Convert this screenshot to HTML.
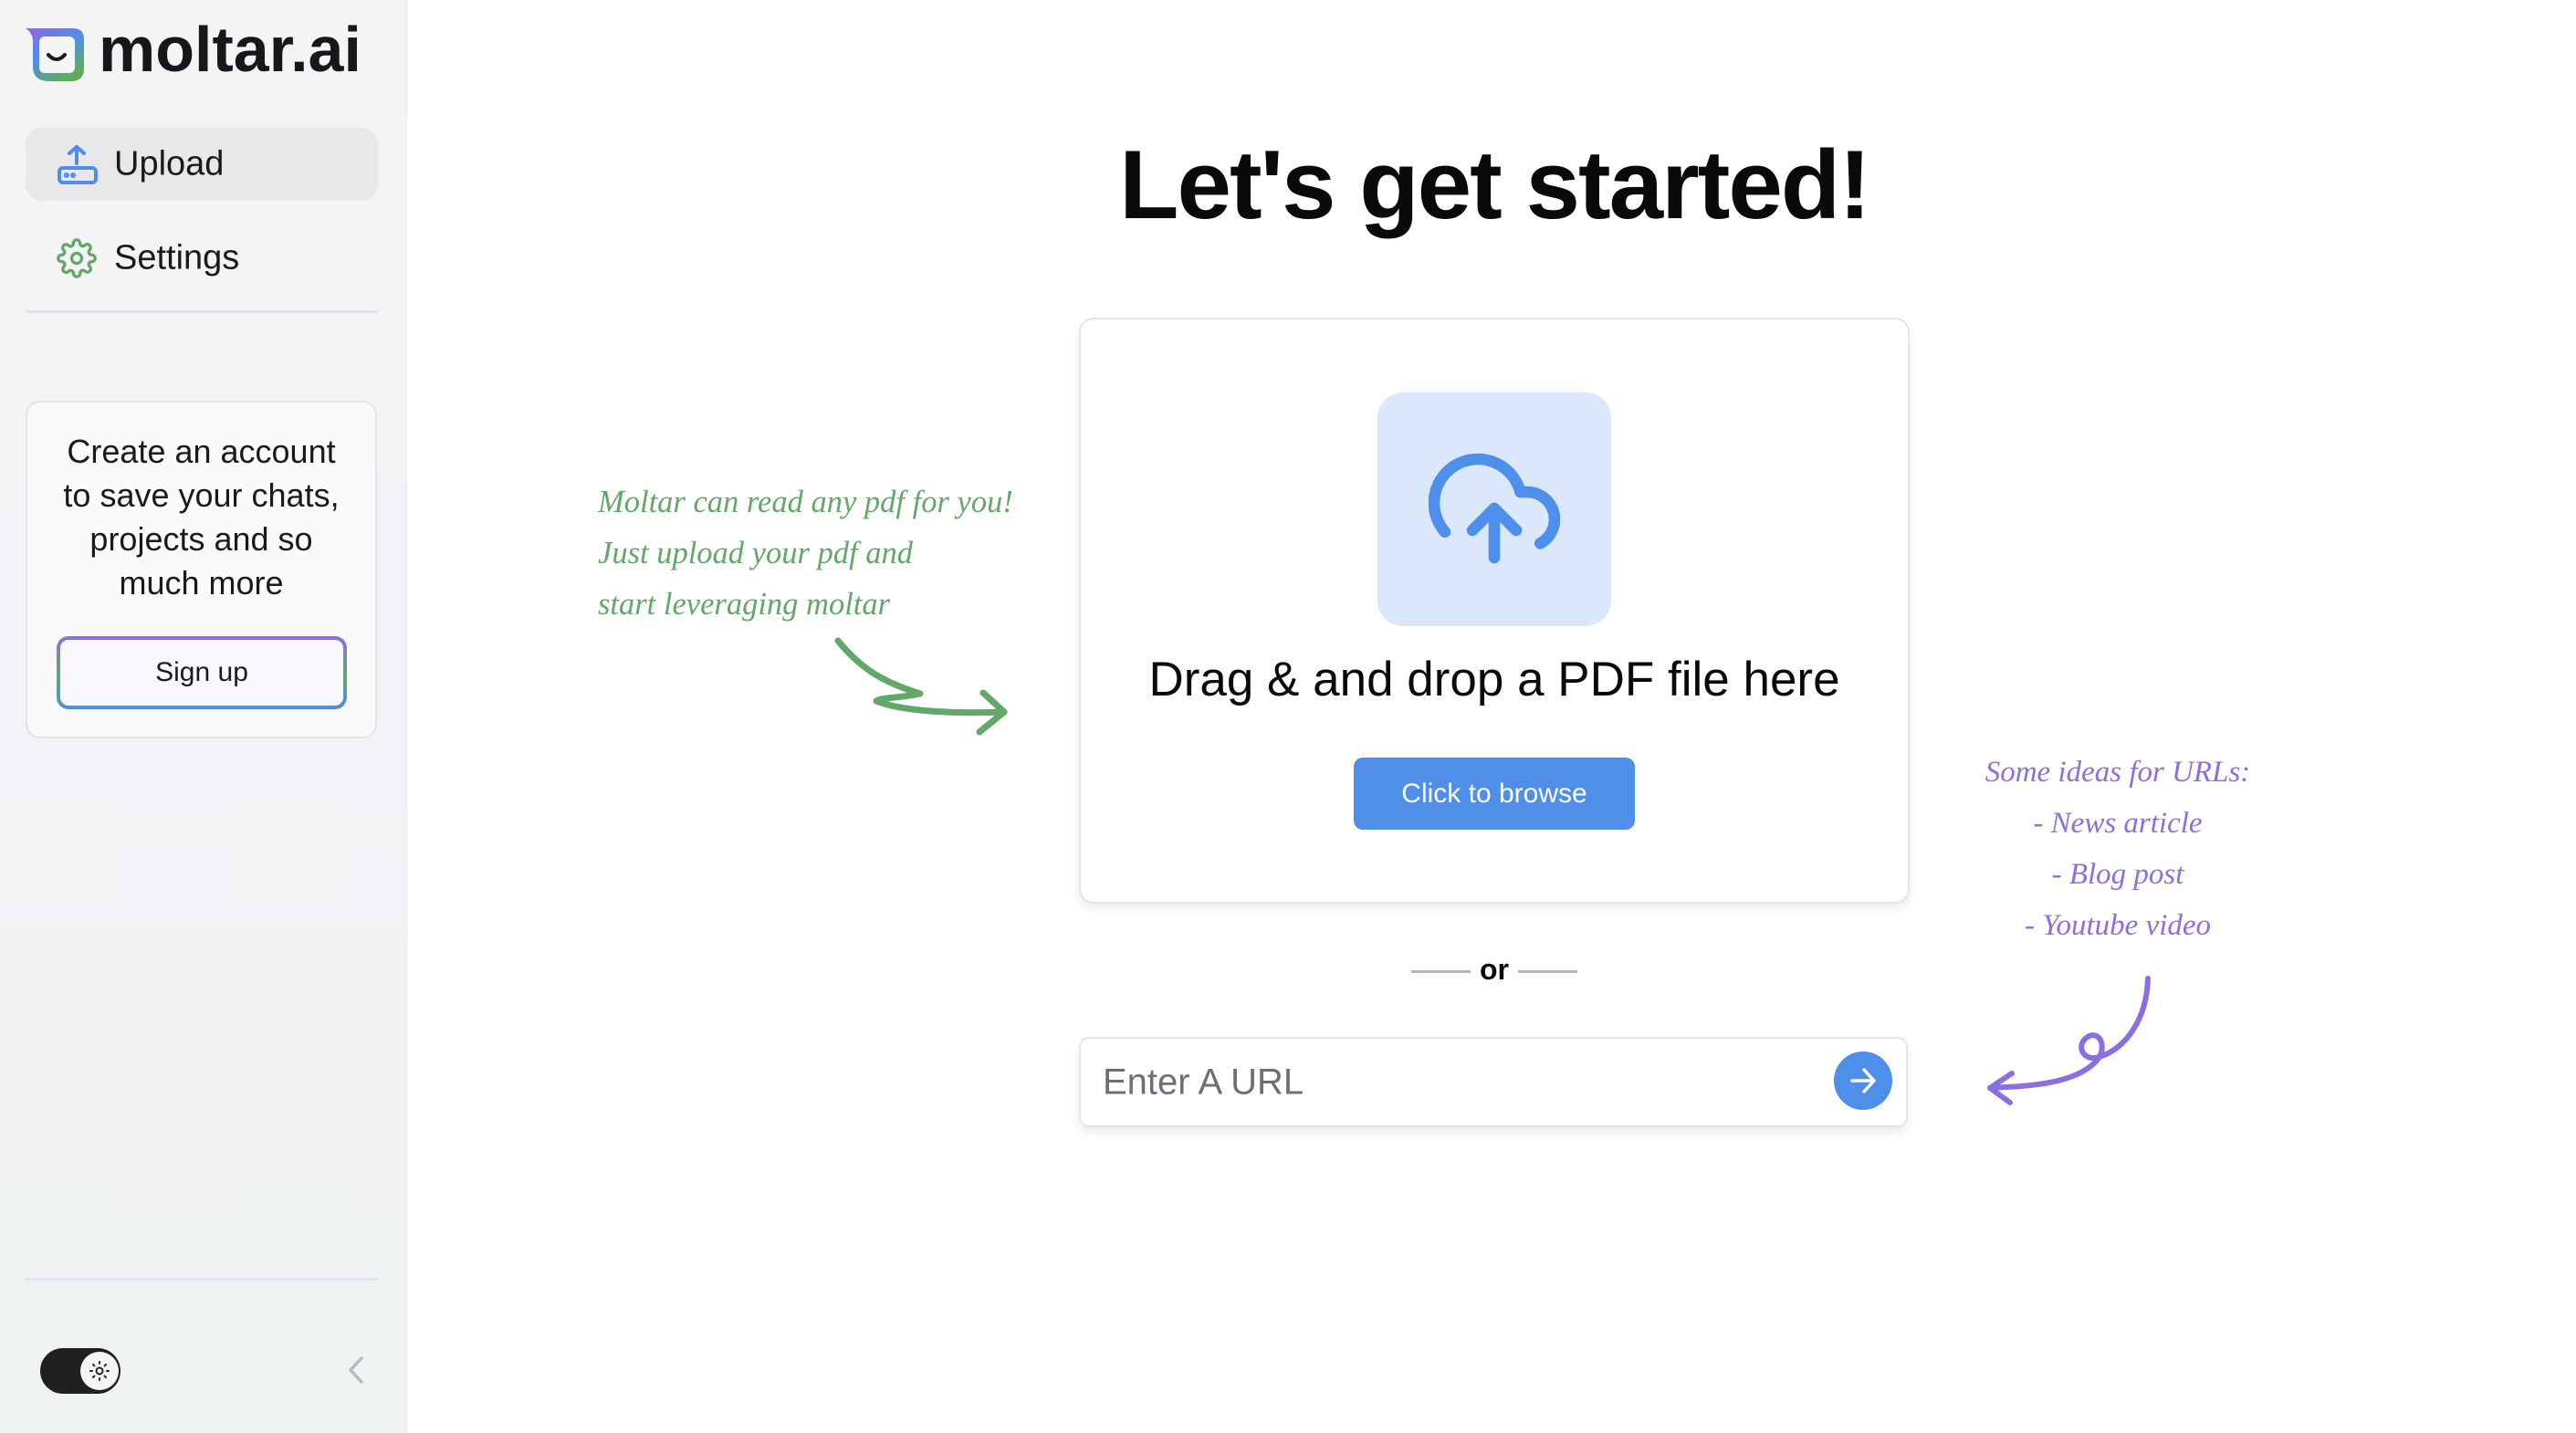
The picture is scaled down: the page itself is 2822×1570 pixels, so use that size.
<!DOCTYPE html>
<html><head><meta charset="utf-8">
<style>
*{margin:0;padding:0;box-sizing:border-box}
html,body{width:2822px;height:1570px;overflow:hidden;background:#fff;font-family:"Liberation Sans",sans-serif;color:#111}
#side{position:absolute;left:0;top:0;width:446px;height:1570px;background:linear-gradient(180deg,#f5f3f4 0%,#f3f3f7 40%,#eef2f1 100%);border-right:1px solid #eceef0}
.abs{position:absolute}
.logo-t{left:108px;top:14px;font-size:70px;font-weight:bold;letter-spacing:0px;color:#18161a}
.nav{left:28px;width:386px;height:80px;border-radius:18px}
.nav span{position:absolute;left:97px;top:50%;transform:translateY(-50%);font-size:38px;color:#1a1a1a}
.hr{height:3px;background:#e2e3e6;left:28px;width:386px}
#card{left:28px;top:439px;width:385px;height:370px;border:2px solid #e3e3e8;border-radius:16px;background:rgba(255,255,255,.6)}
#card p{position:absolute;left:-10px;right:-10px;top:30px;text-align:center;font-size:36px;line-height:48px;color:#1a1a1a}
#sign{position:absolute;left:32px;top:256px;width:318px;height:80px;border-radius:13px;padding:4px;background:linear-gradient(180deg,#8b6fe0,#63a86a 55%,#4c8ee8)}
#sign div{width:100%;height:100%;border-radius:9px;background:#f7f8fb;text-align:center;line-height:72px;font-size:30px;color:#1a1a1a}
h1{position:absolute;left:446px;width:2382px;top:140px;text-align:center;font-size:107px;font-weight:bold;letter-spacing:-2px;color:#0a0a0a}
#drop{left:1182px;top:348px;width:910px;height:642px;border:2px solid #e5e5e5;border-radius:16px;background:#fff;box-shadow:0 6px 10px rgba(0,0,0,.08)}
#ibox{left:1509px;top:430px;width:256px;height:256px;border-radius:28px;background:#dbe7fb}
.drag{left:1182px;width:910px;top:714px;text-align:center;font-size:53px;color:#0a0a0a}
#browse{left:1483px;top:830px;width:308px;height:79px;border-radius:10px;background:#4f8fea;color:#fff;text-align:center;line-height:79px;font-size:30px}
#url{left:1182px;top:1136px;width:908px;height:99px;border:2px solid #e5e5e5;border-radius:11px;background:#fff;box-shadow:0 6px 10px rgba(0,0,0,.08)}
#url span{position:absolute;left:24px;top:50%;transform:translateY(-50%);font-size:40px;color:#6e6e78}
.hand{font-family:"Liberation Serif",serif;font-style:italic}
.g{color:#62a868;left:655px;line-height:56px;font-size:34.5px}
.p{color:#8b6fe0;line-height:56px;text-align:center;left:2140px;width:360px;font-size:33px}
</style></head><body>
<div id="side">
  <svg class="abs" style="left:26px;top:28px" width="68" height="64" viewBox="0 0 68 64">
    <defs><linearGradient id="lg" x1="0" y1="0" x2="0.6" y2="1"><stop offset="0" stop-color="#9163e6"/><stop offset=".5" stop-color="#4f8ee9"/><stop offset="1" stop-color="#62aa5e"/></linearGradient></defs>
    <path d="M2 3 L54 3 Q66 3 66 15 L66 47 Q66 61 52 61 L28 61 Q10 61 10 45 L10 18 Q10 8 2 3 Z" fill="url(#lg)"/>
    <rect x="17" y="12" width="39" height="40" rx="6" fill="#f6f4f4"/>
    <path d="M27 32 Q36 42 45 32" stroke="#1a1a1a" stroke-width="4" fill="none" stroke-linecap="round"/>
  </svg>
  <div class="abs logo-t">moltar.ai</div>
  <div class="abs nav" style="top:140px;background:#e8e7ea">
    <svg class="abs" style="left:34px;top:17px" width="46" height="46" viewBox="0 0 46 46" fill="none" stroke="#4f8ee9" stroke-width="4" stroke-linecap="round" stroke-linejoin="round">
      <path d="M22 4 V22 M14 11 L22 4 L30 11"/><rect x="3" y="27" width="40" height="16" rx="4"/><circle cx="11" cy="35" r="1" fill="#4f8ee9"/><circle cx="18" cy="35" r="1" fill="#4f8ee9"/>
    </svg>
    <span>Upload</span>
  </div>
  <div class="abs nav" style="top:243px">
    <svg class="abs" style="left:34px;top:18px" width="44" height="44" viewBox="0 0 24 24" fill="none" stroke="#62a868" stroke-width="1.8" stroke-linecap="round" stroke-linejoin="round"><circle cx="12" cy="12" r="3"/><path d="M19.4 15a1.65 1.65 0 0 0 .33 1.820l.06.06a2 2 0 1 1-2.830 2.830l-.06-.06a1.65 1.65 0 0 0-1.820-.33 1.65 1.65 0 0 0-1 1.510V21a2 2 0 1 1-4 0v-.09A1.65 1.65 0 0 0 9 19.4a1.65 1.65 0 0 0-1.820.33l-.06.06a2 2 0 1 1-2.830-2.830l.06-.06A1.65 1.65 0 0 0 4.68 15a1.65 1.65 0 0 0-1.510-1H3a2 2 0 1 1 0-4h.09A1.65 1.65 0 0 0 4.6 9a1.65 1.65 0 0 0-.33-1.820l-.06-.06a2 2 0 1 1 2.830-2.830l.06.06A1.65 1.65 0 0 0 9 4.68a1.65 1.65 0 0 0 1-1.510V3a2 2 0 1 1 4 0v.09a1.65 1.65 0 0 0 1 1.510 1.65 1.65 0 0 0 1.820-.33l.06-.06a2 2 0 1 1 2.830 2.830l-.06.06A1.65 1.65 0 0 0 19.4 9a1.65 1.65 0 0 0 1.510 1H21a2 2 0 1 1 0 4h-.09a1.65 1.65 0 0 0-1.510 1z"/></svg>
    <span>Settings</span>
  </div>
  <div class="abs hr" style="top:340px"></div>
  <div id="card" class="abs">
    <p>Create an account<br>to save your chats,<br>projects and so<br>much more</p>
    <div id="sign"><div>Sign up</div></div>
  </div>
  <div class="abs hr" style="top:1400px"></div>
  <div class="abs" style="left:44px;top:1477px;width:88px;height:50px;border-radius:25px;background:#1e211f"></div>
  <div class="abs" style="left:88px;top:1481px;width:42px;height:42px;border-radius:21px;background:#f3f6f4"></div>
  <svg class="abs" style="left:97px;top:1490px" width="24" height="24" viewBox="0 0 24 24" fill="none" stroke="#222" stroke-width="2" stroke-linecap="round"><circle cx="12" cy="12" r="3.5"/><path d="M12 2v2M12 20v2M2 12h2M20 12h2M5 5l1.4 1.4M17.6 17.6L19 19M5 19l1.4-1.4M17.6 6.4L19 5"/></svg>
  <svg class="abs" style="left:378px;top:1486px" width="24" height="30" viewBox="0 0 24 30" fill="none" stroke="#b8bbbd" stroke-width="3.5" stroke-linecap="round" stroke-linejoin="round"><path d="M18 2 L6 15 L18 28"/></svg>
</div>

<h1>Let's get started!</h1>

<div id="drop" class="abs"></div>
<div id="ibox" class="abs"></div>
<svg class="abs" style="left:1565px;top:485px" width="144" height="144" viewBox="0 0 24 24" fill="none" stroke="#4d8fea" stroke-width="2.1" stroke-linecap="round" stroke-linejoin="round"><polyline points="16 16 12 12 8 16"/><line x1="12" y1="12" x2="12" y2="21"/><path d="M20.39 18.39A5 5 0 0 0 18 9h-1.26A8 8 0 1 0 3 16.3"/></svg>
<div class="abs drag">Drag &amp; and drop a PDF file here</div>
<div id="browse" class="abs">Click to browse</div>

<div class="abs" style="left:1546px;top:1063px;width:65px;height:3px;background:#b5b5b5"></div>
<div class="abs" style="left:1663px;top:1063px;width:65px;height:3px;background:#b5b5b5"></div>
<div class="abs" style="left:1611px;top:1044px;width:52px;text-align:center;font-size:32px;font-weight:bold;color:#0a0a0a">or</div>

<div id="url" class="abs"><span>Enter A URL</span></div>
<div class="abs" style="left:2009px;top:1152px;width:64px;height:64px;border-radius:32px;background:#4d8fea"></div>
<svg class="abs" style="left:2021px;top:1164px" width="40" height="40" viewBox="0 0 40 40" fill="none" stroke="#fff" stroke-width="3.5" stroke-linecap="round" stroke-linejoin="round"><path d="M8 20 H32 M21 8 L32 20 L21 32"/></svg>

<div class="abs hand g" style="top:522px">Moltar can read any pdf for you!<br>Just upload your pdf and<br>start leveraging moltar</div>
<svg class="abs" style="left:0;top:0" width="2822" height="1570" fill="none" stroke-linecap="round" stroke-linejoin="round">
  <path d="M918 702 C945 735 970 748 1008 760 C985 765 965 764 960 768 C990 780 1050 782 1100 780" stroke="#62a868" stroke-width="7"/>
  <path d="M1077 759 L1100 780 L1073 802" stroke="#62a868" stroke-width="7"/>
  <path d="M2353 1072 C2352 1115 2330 1148 2300 1158 C2282 1164 2273 1145 2287 1136 C2300 1128 2310 1148 2296 1163 C2272 1188 2222 1190 2180 1192" stroke="#8b6fe0" stroke-width="6"/>
  <path d="M2204 1176 L2180 1192 L2202 1208" stroke="#8b6fe0" stroke-width="6"/>
</svg>
<div class="abs hand p" style="top:818px">Some ideas for URLs:<br>- News article<br>- Blog post<br>- Youtube video</div>
</body></html>
